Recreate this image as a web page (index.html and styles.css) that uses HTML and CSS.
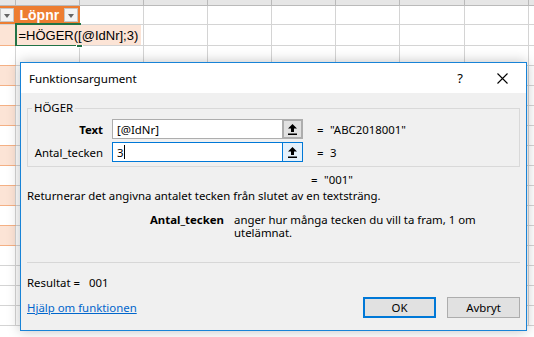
FILE: index.html
```html
<!DOCTYPE html>
<html lang="sv">
<head>
    <meta charset="UTF-8">
    <title>Funktionsargument</title>
    <link rel="stylesheet" href="styles.css">
</head>
<body>
    <table class="sheet">
        <colgroup>
            <col style="width:15px"><col style="width:64px"><col style="width:64px"><col style="width:64px">
            <col style="width:64px"><col style="width:64px"><col style="width:64px"><col style="width:65px">
            <col style="width:64px"><col style="width:20px">
        </colgroup>
        <tr class="colhead">
            <td></td><td></td><td></td><td></td><td></td><td></td><td></td><td></td><td></td><td></td>
        </tr>
        <tr class="r-head">
            <td class="tbl-head"><span class="dd"></span></td>
            <td class="tbl-head">Löpnr<span class="dd"></span></td>
            <td></td><td></td><td></td><td></td><td></td><td></td><td></td><td></td>
        </tr>
        <tr class="r-edit">
            <td class="band"></td>
            <td class="band editcell"><div class="active"><i></i></div><span class="formula">=HÖGER([@IdNr];3)</span></td>
            <td></td><td></td><td></td><td></td><td></td><td></td><td></td><td></td>
        </tr>
        <tr><td class="tline"></td><td></td><td></td><td></td><td></td><td></td><td></td><td></td><td></td><td></td></tr>
        <tr><td class="band"></td><td></td><td></td><td></td><td></td><td></td><td></td><td></td><td></td><td></td></tr>
        <tr><td class="tline"></td><td></td><td></td><td></td><td></td><td></td><td></td><td></td><td></td><td></td></tr>
        <tr><td class="band"></td><td></td><td></td><td></td><td></td><td></td><td></td><td></td><td></td><td></td></tr>
        <tr><td class="tline"></td><td></td><td></td><td></td><td></td><td></td><td></td><td></td><td></td><td></td></tr>
        <tr><td class="band"></td><td></td><td></td><td></td><td></td><td></td><td></td><td></td><td></td><td></td></tr>
        <tr><td class="tline"></td><td></td><td></td><td></td><td></td><td></td><td></td><td></td><td></td><td></td></tr>
        <tr><td class="band"></td><td></td><td></td><td></td><td></td><td></td><td></td><td></td><td></td><td></td></tr>
        <tr><td class="tline"></td><td></td><td></td><td></td><td></td><td></td><td></td><td></td><td></td><td></td></tr>
        <tr><td class="band"></td><td></td><td></td><td></td><td></td><td></td><td></td><td></td><td></td><td></td></tr>
        <tr><td></td><td></td><td></td><td></td><td></td><td></td><td></td><td></td><td></td><td></td></tr>
        <tr><td></td><td></td><td></td><td></td><td></td><td></td><td></td><td></td><td></td><td></td></tr>
        <tr><td></td><td></td><td></td><td></td><td></td><td></td><td></td><td></td><td></td><td></td></tr>
        <tr><td></td><td></td><td></td><td></td><td></td><td></td><td></td><td></td><td></td><td></td></tr>
    </table>

    <div class="dialog">
        <div class="titlebar">
            <span class="title">Funktionsargument</span>
            <span class="help">?</span>
            <svg class="close" width="11" height="11" viewBox="0 0 11 11"><path d="M0.5 0.5 L10.5 10.5 M10.5 0.5 L0.5 10.5" stroke="#000" stroke-width="1.1" fill="none"/></svg>
        </div>
        <div class="body">
            <fieldset class="group">
                <legend>HÖGER</legend>
                <div class="arg">
                    <label class="argname bold">Text</label>
                    <div class="field"><span>[@IdNr]</span></div>
                    <div class="refbtn">
                        <svg width="9" height="11" viewBox="0 0 9 11"><path d="M4.5 0 L9 4.5 L6 4.5 L6 8 L3 8 L3 4.5 L0 4.5 Z" fill="#000"/><rect x="0" y="9.5" width="9" height="1.5" fill="#000"/></svg>
                    </div>
                    <span class="eq">=</span>
                    <span class="val">"ABC2018001"</span>
                </div>
                <div class="arg">
                    <label class="argname">Antal_tecken</label>
                    <div class="field focus"><span>3</span><span class="caret"></span></div>
                    <div class="refbtn focus">
                        <svg width="9" height="11" viewBox="0 0 9 11"><path d="M4.5 0 L9 4.5 L6 4.5 L6 8 L3 8 L3 4.5 L0 4.5 Z" fill="#000"/><rect x="0" y="9.5" width="9" height="1.5" fill="#000"/></svg>
                    </div>
                    <span class="eq">=</span>
                    <span class="val">3</span>
                </div>
            </fieldset>
            <div class="result-line"><span class="eq">=</span><span class="val">"001"</span></div>
            <p class="desc">Returnerar det angivna antalet tecken från slutet av en textsträng.</p>
            <div class="argdesc">
                <span class="bold">Antal_tecken</span>
                <p>anger hur många tecken du vill ta fram, 1 om utelämnat.</p>
            </div>
            <hr class="sep">
            <p class="total">Resultat =<span>001</span></p>
            <div class="footer">
                <a href="#" class="link">Hjälp om funktionen</a>
                <button class="btn primary">OK</button>
                <button class="btn">Avbryt</button>
            </div>
        </div>
    </div>
</body>
</html>
```

FILE: styles.css
```css
body {
    margin: 0;
    width: 534px;
    height: 337px;
    overflow: hidden;
    background-color: #fff;
    font-family: "Noto Sans", sans-serif;
    position: relative;
}

/* spreadsheet behind the dialog */
.sheet {
    border-collapse: collapse;
    table-layout: fixed;
    width: 548px;
    font-family: "Liberation Sans", Arial, sans-serif;
}
.sheet td {
    height: 19px;
    padding: 0;
    border: 1px solid #d4d4d4;
    border-top: none;
    border-left: none;
    overflow: visible;
}
.colhead td {
    height: 5px;
    background-color: #e6e6e6;
    border-bottom: 1px solid #bababa;
    border-right: 1px solid #bababa;
}
.r-head td {
    height: 18px;
}
.r-edit td {
    height: 20px;
}
.tbl-head {
    background-color: #ed7d31;
    color: #fff;
    font-weight: bold;
    font-size: 14px;
    padding-left: 4px !important;
    position: relative;
    border-right-color: #ed7d31 !important;
}
.dd {
    position: absolute;
    right: 1px;
    top: 2px;
    width: 14px;
    height: 14px;
    background-color: #f3f3f3;
    border: 1px solid #c6c6c6;
    box-sizing: border-box;
}
.dd::after {
    content: "";
    position: absolute;
    left: 3px;
    top: 5px;
    border-left: 3.5px solid transparent;
    border-right: 3.5px solid transparent;
    border-top: 4px solid #666;
}
.band {
    background-color: #fce4d6;
    border-bottom-color: #f4b084 !important;
}
.tline {
    border-bottom-color: #f4b084 !important;
}
.editcell {
    position: relative;
    white-space: nowrap;
}
.formula {
    position: relative;
    background-color: #fce4d6;
    font-family: "Liberation Sans", Arial, sans-serif;
    font-size: 13px;
    padding: 3px 3px 2px 2px;
    margin-left: 1px;
    color: #000;
}
.active {
    position: absolute;
    left: -1px;
    top: -2px;
    right: -2px;
    bottom: -1px;
    border: 2px solid #217346;
}
.active i {
    position: absolute;
    right: -4px;
    bottom: -4px;
    width: 5px;
    height: 5px;
    background-color: #217346;
    border: 1px solid #fff;
}

/* function arguments dialog */
.dialog {
    position: absolute;
    left: 20px;
    top: 62px;
    width: 505px;
    height: 267px;
    border: 1px solid #1883d7;
    background-color: #f0f0f0;
    box-shadow: 0 0 12px rgba(0, 0, 0, 0.25);
    font-size: 11.4px;
    color: #000;
}
.titlebar {
    height: 30px;
    background-color: #fff;
    display: flex;
    align-items: center;
    padding-left: 8px;
}
.title {
    flex: 1;
    font-size: 11.6px;
}
.help {
    font-size: 13px;
    margin-right: 34px;
}
.close {
    margin-right: 18px;
}
.body {
    padding: 0 6px;
    display: flex;
    flex-direction: column;
}
.group {
    margin: 7px 0 0;
    padding: 3px 4px 4px;
    border: 1px solid #d9d9d9;
    min-width: 0;
}
.group legend {
    padding: 0 2px;
    line-height: 16px;
}
.arg {
    display: flex;
    align-items: center;
    height: 20px;
    margin-bottom: 3px;
}
.arg:last-child {
    margin-bottom: 0;
}
.argname {
    width: 71px;
    text-align: right;
    margin-right: 9px;
}
.bold {
    font-weight: bold;
}
.field {
    width: 170px;
    height: 20px;
    box-sizing: border-box;
    background-color: #fff;
    border: 1px solid #adadad;
    border-right: none;
    padding-left: 4px;
    display: flex;
    align-items: center;
}
.field.focus {
    border: 1px solid #0078d7;
    border-right: none;
}
.caret {
    width: 1px;
    height: 14px;
    background-color: #000;
}
.refbtn {
    width: 21px;
    height: 20px;
    box-sizing: border-box;
    border: 2px solid #adadad;
    background-color: #e1e1e1;
    display: flex;
    align-items: center;
    justify-content: center;
}
.refbtn.focus {
    border: 1px solid #0078d7;
    background-color: #e5f1fb;
}
.eq {
    margin-left: 14px;
    width: 13px;
}
.result-line {
    display: flex;
    margin-top: 5px;
    padding-left: 284px;
    line-height: 16px;
}
.result-line .eq {
    margin-left: 0;
}
.desc {
    margin: 0;
    line-height: 16px;
}
.argdesc {
    display: flex;
    margin-top: 9px;
    line-height: 13px;
}
.argdesc .bold {
    width: 197px;
    text-align: right;
    margin-right: 10px;
    flex-shrink: 0;
}
.argdesc p {
    margin: 0;
    width: 246px;
}
.sep {
    margin: 23px 0 0;
    border: none;
    border-top: 1px solid #d7d7d7;
}
.total {
    margin: 12px 0 0;
    line-height: 16px;
}
.total span {
    margin-left: 9px;
}
.footer {
    display: flex;
    align-items: center;
    margin-top: 6px;
}
.link {
    flex: 1;
    color: #0066cc;
    text-decoration: underline;
}
.btn {
    width: 73px;
    height: 21px;
    margin-left: 11px;
    font-family: "Noto Sans", sans-serif;
    font-size: 11.4px;
    background-color: #e1e1e1;
    border: 1px solid #adadad;
    padding: 0;
}
.btn.primary {
    border: 2px solid #0078d7;
    margin-left: 0;
}
```
